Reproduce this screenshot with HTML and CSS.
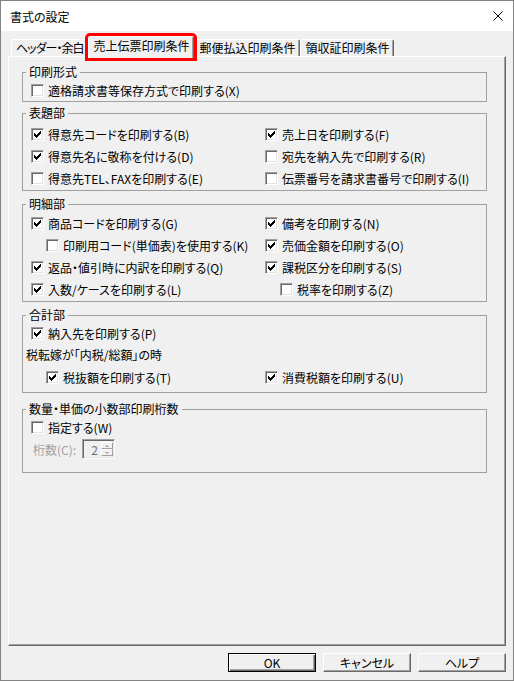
FILE: index.html
```html
<!DOCTYPE html>
<html lang="ja">
<head>
<meta charset="utf-8">
<title>書式の設定</title>
<link rel="stylesheet" href="styles.css">
</head>
<body>
<div class="window">
	<div class="titlebar">
		<span class="title">書式の設定</span>
		<svg class="close" width="10" height="10" viewBox="0 0 10 10"><path d="M0.5 0.5L9.5 9.5M9.5 0.5L0.5 9.5" stroke="#000" stroke-width="1"/></svg>
	</div>

	<div class="tabs">
		<div class="tab narrow">ヘッダー・余白</div>
		<div class="tab selected">売上伝票印刷条件</div>
		<div class="tab">郵便払込印刷条件</div>
		<div class="tab">領収証印刷条件</div>
	</div>

	<div class="panel">
		<fieldset class="group format">
			<legend>印刷形式</legend>
			<label class="check"><span class="box"></span>適格請求書等保存方式で印刷する(X)</label>
		</fieldset>

		<fieldset class="group header">
			<legend>表題部</legend>
			<div class="cols">
				<label class="check"><span class="box on"><svg viewBox="0 0 7 7"><path d="M6 0H7V3H6V4H5V5H4V6H3V7H2V6H1V5H0V2H1V3H2V4H3V3H4V2H5V1H6Z"/></svg></span>得意先コードを印刷する(B)</label>
				<label class="check"><span class="box on"><svg viewBox="0 0 7 7"><path d="M6 0H7V3H6V4H5V5H4V6H3V7H2V6H1V5H0V2H1V3H2V4H3V3H4V2H5V1H6Z"/></svg></span>売上日を印刷する(F)</label>
				<label class="check"><span class="box on"><svg viewBox="0 0 7 7"><path d="M6 0H7V3H6V4H5V5H4V6H3V7H2V6H1V5H0V2H1V3H2V4H3V3H4V2H5V1H6Z"/></svg></span>得意先名に敬称を付ける(D)</label>
				<label class="check"><span class="box"></span>宛先を納入先で印刷する(R)</label>
				<label class="check"><span class="box"></span>得意先TEL、FAXを印刷する(E)</label>
				<label class="check"><span class="box"></span>伝票番号を請求書番号で印刷する(I)</label>
			</div>
		</fieldset>

		<fieldset class="group detail">
			<legend>明細部</legend>
			<div class="cols">
				<label class="check"><span class="box on"><svg viewBox="0 0 7 7"><path d="M6 0H7V3H6V4H5V5H4V6H3V7H2V6H1V5H0V2H1V3H2V4H3V3H4V2H5V1H6Z"/></svg></span>商品コードを印刷する(G)</label>
				<label class="check"><span class="box on"><svg viewBox="0 0 7 7"><path d="M6 0H7V3H6V4H5V5H4V6H3V7H2V6H1V5H0V2H1V3H2V4H3V3H4V2H5V1H6Z"/></svg></span>備考を印刷する(N)</label>
				<label class="check indent"><span class="box"></span>印刷用コード(単価表)を使用する(K)</label>
				<label class="check"><span class="box on"><svg viewBox="0 0 7 7"><path d="M6 0H7V3H6V4H5V5H4V6H3V7H2V6H1V5H0V2H1V3H2V4H3V3H4V2H5V1H6Z"/></svg></span>売価金額を印刷する(O)</label>
				<label class="check"><span class="box on"><svg viewBox="0 0 7 7"><path d="M6 0H7V3H6V4H5V5H4V6H3V7H2V6H1V5H0V2H1V3H2V4H3V3H4V2H5V1H6Z"/></svg></span>返品・値引時に内訳を印刷する(Q)</label>
				<label class="check"><span class="box on"><svg viewBox="0 0 7 7"><path d="M6 0H7V3H6V4H5V5H4V6H3V7H2V6H1V5H0V2H1V3H2V4H3V3H4V2H5V1H6Z"/></svg></span>課税区分を印刷する(S)</label>
				<label class="check"><span class="box on"><svg viewBox="0 0 7 7"><path d="M6 0H7V3H6V4H5V5H4V6H3V7H2V6H1V5H0V2H1V3H2V4H3V3H4V2H5V1H6Z"/></svg></span>入数/ケースを印刷する(L)</label>
				<label class="check indent"><span class="box"></span>税率を印刷する(Z)</label>
			</div>
		</fieldset>

		<fieldset class="group total">
			<legend>合計部</legend>
			<label class="check"><span class="box on"><svg viewBox="0 0 7 7"><path d="M6 0H7V3H6V4H5V5H4V6H3V7H2V6H1V5H0V2H1V3H2V4H3V3H4V2H5V1H6Z"/></svg></span>納入先を印刷する(P)</label>
			<div class="note">税転嫁が「内税/総額」の時</div>
			<div class="cols">
				<label class="check indent"><span class="box on"><svg viewBox="0 0 7 7"><path d="M6 0H7V3H6V4H5V5H4V6H3V7H2V6H1V5H0V2H1V3H2V4H3V3H4V2H5V1H6Z"/></svg></span>税抜額を印刷する(T)</label>
				<label class="check"><span class="box on"><svg viewBox="0 0 7 7"><path d="M6 0H7V3H6V4H5V5H4V6H3V7H2V6H1V5H0V2H1V3H2V4H3V3H4V2H5V1H6Z"/></svg></span>消費税額を印刷する(U)</label>
			</div>
		</fieldset>

		<fieldset class="group decimal">
			<legend>数量・単価の小数部印刷桁数</legend>
			<label class="check"><span class="box"></span>指定する(W)</label>
			<div class="field disabled">
				<span class="field-label">桁数(C):</span>
				<div class="spin">
					<span class="value">2</span>
					<span class="arrows">
						<span class="up"></span>
						<span class="down"></span>
					</span>
				</div>
			</div>
		</fieldset>
	</div>

	<div class="buttons">
		<button class="btn default">OK</button>
		<button class="btn">キャンセル</button>
		<button class="btn">ヘルプ</button>
	</div>
</div>
</body>
</html>
```

FILE: styles.css
```css
body {
	margin: 0;
	font-family: "Noto Sans CJK JP", "Liberation Sans", sans-serif;
	font-size: 12px;
	font-feature-settings: "palt";
	color: #000;
	background: #f0f0f0;
}
.window {
	width: 514px;
	height: 681px;
	box-sizing: border-box;
	border: 1px solid #838383;
	background: #f0f0f0;
}
.titlebar {
	height: 30px;
	background: #fff;
	display: flex;
	align-items: center;
	justify-content: space-between;
	padding: 0 10px 0 9px;
}
.close {
	display: block;
}

/* tabs */
.tabs {
	display: flex;
	align-items: flex-end;
	height: 25px;
	padding-left: 10px;
}
.tab {
	height: 17px;
	box-sizing: border-box;
	line-height: 16px;
	padding: 0 4px;
	border: 1px solid;
	border-bottom: none;
	border-color: #fff #696969 #fff #fff;
	box-shadow: inset -1px 0 #a0a0a0;
	border-radius: 2px 2px 0 0;
	white-space: nowrap;
}
.tab.narrow {
	letter-spacing: -1px;
}
.tab.selected {
	position: relative;
	z-index: 1;
	height: 22px;
	margin-bottom: -2px;
	padding: 0 4px 4px;
	line-height: 17px;
	background: #f0f0f0;
	outline: 3px solid #f00;
}

/* page */
.panel {
	height: 590px;
	margin: 0 7px;
	box-sizing: border-box;
	border: 1px solid;
	border-color: #fff #696969 #696969 #fff;
	box-shadow: inset -1px -1px #a0a0a0;
	padding: 8px 18px 0 13px;
}
.group {
	margin: 0;
	padding: 0 0 1px;
	border: 1px solid #a0a0a0;
	min-width: 0;
}
.group legend {
	margin-left: 3px;
	padding: 0 3px;
	line-height: 14px;
}
.group.format {
	padding: 0;
}
.group.header {
	margin-top: 4px;
	padding-top: 3px;
}
.group.detail {
	margin-top: 6px;
	padding-top: 1px;
}
.group.total {
	margin-top: 6px;
	padding-bottom: 4px;
}
.group.decimal {
	margin-top: 9px;
	padding-bottom: 12px;
}
.cols {
	display: grid;
	grid-template-columns: 234px 1fr;
}
.check {
	display: flex;
	align-items: center;
	height: 22px;
	padding-left: 8px;
	white-space: nowrap;
}
.check.indent {
	padding-left: 23px;
}
.box {
	width: 13px;
	height: 13px;
	box-sizing: border-box;
	margin-right: 4px;
	border: 1px solid;
	border-color: #a0a0a0 #fff #fff #a0a0a0;
	box-shadow: inset 1px 1px #696969, inset -1px -1px #e3e3e3;
	background: #fff;
	flex-shrink: 0;
}
.box svg {
	display: block;
	width: 7px;
	height: 7px;
	margin: 2px 0 0 2px;
	shape-rendering: crispEdges;
}
.note {
	height: 22px;
	line-height: 22px;
	padding-left: 3px;
}

/* decimal digits */
.field {
	display: flex;
	align-items: center;
	height: 22px;
	padding-left: 10px;
}
.field-label {
	width: 49px;
	color: #a0a0a0;
}
.spin {
	display: flex;
	width: 33px;
	height: 20px;
	box-sizing: border-box;
	padding: 2px 1px 2px 2px;
	border: 1px solid;
	border-color: #a0a0a0 #fff #fff #a0a0a0;
	box-shadow: inset 1px 1px #696969, inset -1px -1px #e3e3e3;
}
.spin .value {
	flex: 1;
	text-align: right;
	padding-right: 3px;
	line-height: 15px;
	color: #6d6d6d;
}
.spin .arrows {
	display: flex;
	flex-direction: column;
	width: 12px;
}
.arrows span {
	flex: 1;
	position: relative;
	border: 1px solid;
	border-color: #fff #a0a0a0 #a0a0a0 #fff;
}
.arrows span::after {
	content: "";
	position: absolute;
	left: 3px;
	top: 2px;
	border: 2px solid transparent;
}
.arrows .up::after {
	top: 0;
	border-bottom-color: #a0a0a0;
}
.arrows .down::after {
	top: 2px;
	border-top-color: #a0a0a0;
}

/* buttons */
.buttons {
	display: flex;
	justify-content: flex-end;
	gap: 7px;
	margin-top: 7px;
	padding-right: 7px;
}
.btn {
	width: 88px;
	height: 19px;
	box-sizing: border-box;
	padding: 0;
	border: 1px solid;
	border-color: #fff #696969 #696969 #fff;
	box-shadow: inset -1px -1px #a0a0a0;
	background: #f0f0f0;
	font: inherit;
	line-height: 16px;
	color: #000;
}
.btn.default {
	border-color: #000;
	box-shadow: inset 1px 1px #fff, inset -1px -1px #696969, inset -2px -2px #a0a0a0;
}
```
